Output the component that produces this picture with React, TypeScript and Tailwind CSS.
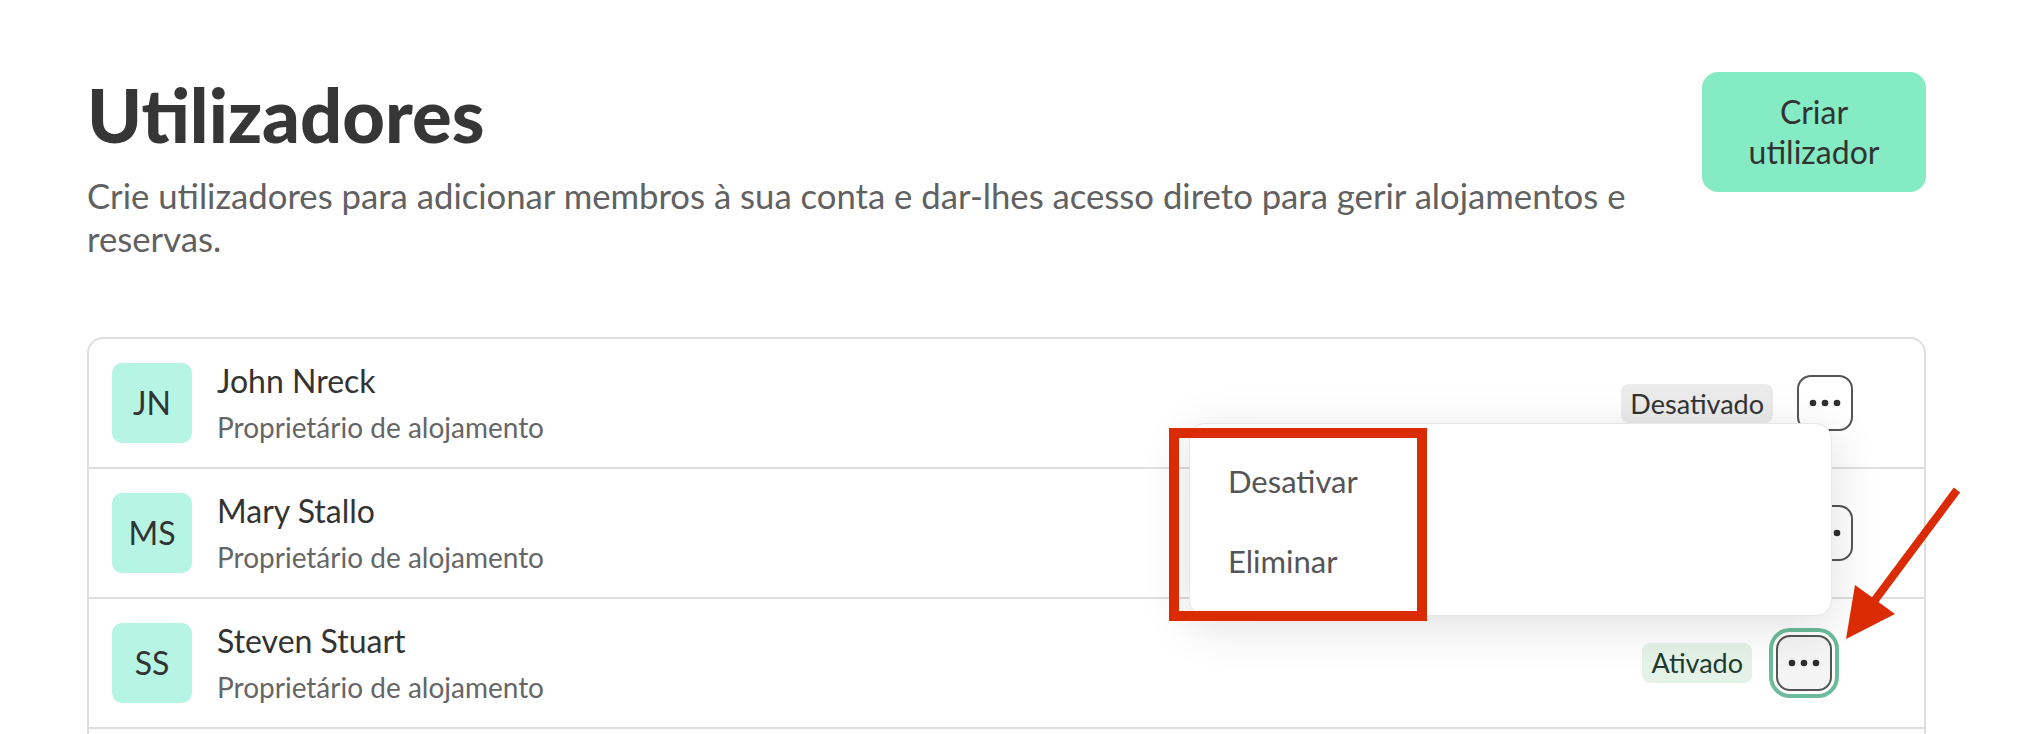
import React from "react";

type User = {
  initials: string;
  name: string;
  role: string;
  status: "Ativado" | "Desativado";
  focused?: boolean;
};

const users: User[] = [
  { initials: "JN", name: "John Nreck", role: "Proprietário de alojamento", status: "Desativado" },
  { initials: "MS", name: "Mary Stallo", role: "Proprietário de alojamento", status: "Ativado" },
  { initials: "SS", name: "Steven Stuart", role: "Proprietário de alojamento", status: "Ativado", focused: true },
];

function Dots() {
  return (
    <svg width="32" height="8" viewBox="0 0 32 8" fill="#2f2f2f">
      <circle cx="4" cy="4" r="3.3" />
      <circle cx="16" cy="4" r="3.3" />
      <circle cx="28" cy="4" r="3.3" />
    </svg>
  );
}

function StatusBadge({ status }: { status: User["status"] }) {
  if (status === "Ativado") {
    return (
      <span className="h-[40px] px-[9px] rounded-lg bg-[#e5f2e8] text-[#1d3b33] text-[27px] leading-[40px]">
        Ativado
      </span>
    );
  }
  return (
    <span className="h-[39px] px-[9px] rounded-lg bg-[#ebebeb] text-[#333] text-[27px] leading-[39px]">
      Desativado
    </span>
  );
}

function UserRow({ user }: { user: User }) {
  return (
    <div className="h-[130px] border-b-2 border-[#dedede] flex items-center pl-[23px] pr-[71px]">
      <div className="w-20 h-20 rounded-[10px] bg-[#b6f5e3] flex items-center justify-center text-[32px] text-[#333]">
        {user.initials}
      </div>
      <div className="ml-[25px] flex flex-col">
        <span className="text-[32px] leading-[40px] text-[#333]">{user.name}</span>
        <span className="mt-2 text-[28px] leading-[36px] text-[#666]">{user.role}</span>
      </div>
      <div className={`ml-auto flex items-center gap-6 ${user.focused ? "mr-[21px]" : ""}`}>
        <StatusBadge status={user.status} />
        <button
          className={
            user.focused
              ? "w-[56px] h-[56px] rounded-[14px] border-2 border-[#555] bg-[#f4f4f4] flex items-center justify-center ring-4 ring-[#6cbb9c] ring-offset-[3px]"
              : "w-[56px] h-[56px] rounded-[14px] border-2 border-[#555] bg-white flex items-center justify-center"
          }
        >
          <Dots />
        </button>
      </div>
    </div>
  );
}

export default function App() {
  return (
    <div className="relative w-[2026px] h-[734px] overflow-hidden bg-white font-['Lato',sans-serif]">
      <div className="pl-[87px] pr-[100px] pt-[72px]">
        <div className="flex items-start justify-between">
          <div className="w-[1580px]">
            <h1 className="text-[74px] leading-[86px] font-black text-[#363636]">Utilizadores</h1>
            <p className="mt-4 text-[34.7px] leading-[43px] text-[#616161]">
              Crie utilizadores para adicionar membros à sua conta e dar-lhes acesso direto para gerir alojamentos e
              reservas.
            </p>
          </div>
          <button className="w-[224px] h-[120px] rounded-[16px] bg-[#85ebc4] text-[32px] leading-[40px] text-[#333]">
            Criar
            <br />
            utilizador
          </button>
        </div>

        <div className="mt-[77px] border-2 border-b-0 border-[#dedede] rounded-t-[16px]">
          {users.map((u) => (
            <UserRow key={u.initials} user={u} />
          ))}
          <div className="h-[130px]" />
        </div>
      </div>

      {/* open menu of the focused row */}
      <div className="absolute left-[1189px] top-[423px] w-[643px] h-[193px] bg-white rounded-[16px] border border-[#e6e6e6] shadow-[0_10px_48px_rgba(0,0,0,0.13)] pt-[17px]">
        <div className="h-[80px] flex items-center pl-[38px] text-[31px] text-[#555]">Desativar</div>
        <div className="h-[80px] flex items-center pl-[38px] text-[31px] text-[#555]">Eliminar</div>
      </div>

      {/* annotation */}
      <div className="absolute left-[1169px] top-[428px] w-[258px] h-[193px] border-[10px] border-[#db2b05] pointer-events-none" />
      <svg className="absolute left-[1830px] top-[480px] pointer-events-none" width="140" height="170" viewBox="0 0 140 170">
        <line x1="127" y1="10" x2="42" y2="124" stroke="#db2b05" strokeWidth="8" />
        <polygon points="16,159 25,105 65,134" fill="#db2b05" />
      </svg>
    </div>
  );
}
